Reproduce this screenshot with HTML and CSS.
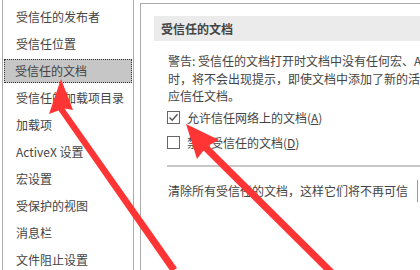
FILE: index.html
```html
<!DOCTYPE html>
<html>
<head>
<meta charset="utf-8">
<link rel="stylesheet" href="styles.css">
</head>
<body>
<div class="page">
  <div class="nav">
    <div class="item">受信任的发布者</div>
    <div class="item">受信任位置</div>
    <div class="item sel">受信任的文档</div>
    <div class="item">受信任的加载项目录</div>
    <div class="item">加载项</div>
    <div class="item">ActiveX 设置</div>
    <div class="item">宏设置</div>
    <div class="item">受保护的视图</div>
    <div class="item">消息栏</div>
    <div class="item">文件阻止设置</div>
  </div>
  <div class="main">
    <div class="hdr">受信任的文档</div>
    <div class="body">
      <div class="warn">
        <div class="ln">警告: 受信任的文档打开时文档中没有任何宏、ActiveX 控件或其他活动内容的提示</div>
        <div class="ln">时，将不会出现提示，即使文档中添加了新的活动内容或对现有活动内容进行了更改</div>
        <div class="ln">应信任文档。</div>
      </div>
      <div class="row">
        <span class="cb"><svg width="13" height="13" viewBox="0 0 13 13"><path d="M2.5 6.5 L5.2 9.3 L10.5 3.2" fill="none" stroke="#555" stroke-width="1.4"/></svg></span>
        <span class="lbl">允许信任网络上的文档(<u>A</u>)</span>
      </div>
      <div class="row">
        <span class="cb"></span>
        <span class="lbl">禁用受信任的文档(<u>D</u>)</span>
      </div>
      <div class="sep"></div>
      <div class="clear">
        <span class="ln">清除所有受信任的文档，这样它们将不再可信</span>
        <span class="btn"></span>
      </div>
    </div>
  </div>
  <svg class="arrows" width="420" height="270" viewBox="0 0 420 270">
    <g fill="#ff3434">
      <polygon points="61,79 49,114 58.5,110.5 171,272 177,268 64.5,108.5 73,110"/>
      <polygon points="186,124 197,159 203.5,150.5 330,276 335,271 208.5,145.5 219,140"/>
    </g>
  </svg>
</div>
</body>
</html>
```
FILE: styles.css
```css
html, body {
  margin: 0;
  padding: 0;
  background: #fff;
}
.page {
  position: relative;
  width: 420px;
  height: 270px;
  overflow: hidden;
  display: flex;
  font-family: "Noto Sans CJK SC", "Noto Sans", sans-serif;
  font-size: 12px;
  color: #444;
}
.nav {
  margin-left: 2px;
  width: 130px;
  flex: none;
  border-left: 1px solid #ababab;
  border-right: 1px solid #ababab;
  padding-top: 5px;
  display: flex;
  flex-direction: column;
  gap: 3px;
}
.item {
  height: 24px;
  line-height: 24px;
  padding-left: 12px;
  white-space: nowrap;
  margin: 0 1px;
}
.item.sel {
  background: #c6c6c6;
  outline: 1px dotted #333;
  outline-offset: -1px;
  padding-left: 11px;
}
.main {
  margin-left: 6px;
  margin-top: 3px;
  flex: none;
  width: 600px;
  border-left: 1px solid #ababab;
  border-top: 1px solid #ababab;
  padding: 12px 0 0 13px;
}
.hdr {
  height: 25px;
  line-height: 25px;
  background: #ebebeb;
  padding-left: 7px;
  font-weight: bold;
  color: #444;
}
.body {
  padding-left: 13px;
}
.warn {
  margin-top: 11px;
}
.ln {
  white-space: nowrap;
  line-height: 17.5px;
  padding-left: 1px;
}
.row {
  height: 25px;
  display: flex;
  align-items: center;
  gap: 7px;
}
.row:first-of-type { margin-top: 2px; }
.cb {
  width: 11px;
  height: 11px;
  border: 1px solid #666;
  display: flex;
  align-items: center;
  justify-content: center;
  flex: none;
}
.cb svg { display: block; flex: none; }
.lbl { white-space: nowrap; }
.sep {
  margin-top: 10px;
  height: 2px;
  background: #c8c8c8;
}
.clear {
  margin-top: 13px;
  display: flex;
  align-items: center;
  height: 22px;
}
.btn {
  margin-left: 9px;
  width: 60px;
  height: 22px;
  border-left: 1px solid #999;
  flex: none;
}
.arrows {
  position: absolute;
  left: 0;
  top: 0;
}
```
